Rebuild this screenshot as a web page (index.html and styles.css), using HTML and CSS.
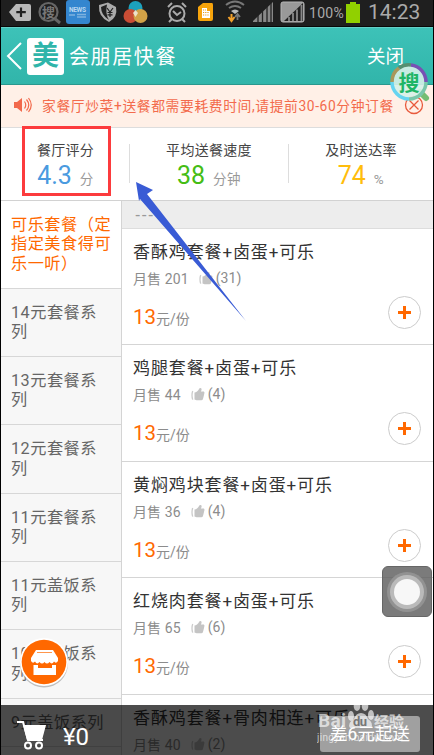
FILE: index.html
```
<!DOCTYPE html>
<html lang="zh-CN">
<head>
<meta charset="utf-8">
<title>会朋居快餐</title>
<link rel="stylesheet" href="styles.css">
</head>
<body>
<svg class="defs" width="0" height="0">
  <symbol id="thumb" viewBox="0 0 14 14"><path d="M1.700 4Q.3 8 1.700 12.600" fill="none" stroke="#ccc" stroke-width="1.300"/><path d="M3.500 5.500Q6 5.500 8.500 1.200Q10.900.3 10.600 3L9.800 4.500H12.800Q13.800 5 13.300 6.700L12 12Q11.600 13.300 10.300 13.300H5.500L3.500 12.500Z" fill="#c4c4c4"/></symbol>
</svg>
<div class="phone">
  <div class="status">
    <svg class="status-icons" viewBox="0 0 310 27" width="310" height="27">
      <path d="M9 12L16 4H29Q31 4 31 6V19Q31 21 29 21H16Z" fill="#b9b9b9"/><path d="M21 7.500V17M16.300 12.200H25.800" stroke="#222" stroke-width="2.200"/>
      <circle cx="48.500" cy="12" r="9" fill="none" stroke="#666" stroke-width="2.200"/><path d="M54 18L60 23" stroke="#666" stroke-width="3"/><text x="42" y="17" font-size="13" font-weight="700" fill="#777">搜</text>
      <rect x="66" y="0" width="24" height="24" rx="3" fill="#3486cf"/><text x="69" y="11.500" font-size="6.500" font-weight="700" fill="#b8d6ef" textLength="17">NEWS</text><path d="M69 15H75M77 14.500H86M77 17H86" stroke="#7db2df" stroke-width="1.500"/>
      <path d="M99 5L108 2.500L116 7Q118 17 109 22Q98 17 99 5Z" fill="#aaa"/><path d="M101 7L107 4.500Q105 14 109 20Q101 15 101 7Z" fill="#222"/><path d="M107 8L110 12L113 8M110 12V17M107.500 12.500H112.500M107.500 14.800H112.500" fill="none" stroke="#222" stroke-width="1.200"/>
      <circle cx="135.500" cy="8" r="7" fill="#1ca1bd"/><circle cx="130.500" cy="16" r="7" fill="#c94d35"/><circle cx="140.500" cy="16" r="7" fill="#d2a247"/><path d="M135.500 10L138 13L135.500 17L133 13Z" fill="#eee2c9"/>
      <g fill="none" stroke="#aaa" stroke-width="2"><circle cx="177" cy="13.500" r="7.500"/><path d="M173 11L177 15L181 12M168 7L172 3M182 3L186 7M172 19L169 22M182 19L185 22"/></g>
      <path d="M198 7L203 3H212Q213 3 213 5V19Q213 21 211 21H200Q198 21 198 19Z" fill="#f7a40c"/><path d="M202 8H207V11H210V18H202Z" fill="#fff"/><path d="M203 10H206M203 12.500H209M203 15H209" stroke="#e79a10" stroke-dasharray="1.200 1"/>
      <g fill="none" stroke="#777" stroke-width="2"><path d="M226 5Q235 -2 244 5"/><path d="M229 8Q235 4 241 8"/></g><path d="M231 11Q235 8 239 11L235 14Z" fill="#bbb"/><path d="M231.500 14V20M228.500 17L231.500 21L234.500 17" fill="none" stroke="#f2a12c" stroke-width="2"/><path d="M237.500 20V14M235 17L237.500 14L240 17" fill="none" stroke="#777" stroke-width="1.800"/>
      <path d="M253 22V21L273 2V22Z" fill="#888"/><path d="M258 15V22M262.500 11V22M267 7V22M271 3V22" stroke="#222" stroke-width="1.300"/>
      <rect x="281" y="2" width="23" height="20" rx="2" fill="#999" stroke="#b5b5b5"/><path d="M284 21L303 3V21Z" fill="#222"/><path d="M289 17V21M293 13V21M297 9.500V21M301.500 5V21" stroke="#888" stroke-width="1.800"/>
    </svg>
    <span class="percent">100%</span>
    <i class="battery"></i>
    <span class="clock">14:23</span>
  </div>
  <header class="header">
    <svg class="back" width="16" height="28" viewBox="0 0 16 28"><path d="M15 1L2 14L15 27" fill="none" stroke="#fff" stroke-width="2"/></svg>
    <div class="logo">美</div>
    <h1>会朋居快餐</h1>
    <span class="close">关闭</span>
  </header>
  <div class="notice">
    <svg width="20" height="18" viewBox="0 0 20 18"><path d="M1 6H4L9 2V16L4 12H1Z" fill="#f2694b"/><path d="M11.500 5.500Q14 9 11.500 12.500M13.500 3.500Q18 9 13.500 14.500M15.500 2Q21 9 15.500 16" fill="none" stroke="#f2694b" stroke-width="1.200"/></svg>
    <span class="notice-text">家餐厅炒菜+送餐都需要耗费时间,请提前30-60分钟订餐</span>
    <svg class="dismiss" width="20" height="20" viewBox="0 0 20 20"><g fill="none" stroke="#e85a3c" stroke-width="1.300"><circle cx="10" cy="10" r="8.500"/><path d="M5.500 5.500L14.500 14.500M14.500 5.500L5.500 14.500"/></g></svg>
  </div>
  <div class="stats">
    <div class="stat blue"><p>餐厅评分</p><div><b>4.3</b><span>分</span></div></div>
    <div class="stat green"><p>平均送餐速度</p><div><b>38</b><span>分钟</span></div></div>
    <div class="stat yellow"><p>及时送达率</p><div><b>74</b><span>%</span></div></div>
  </div>
  <div class="content">
    <nav class="menu">
      <div class="active">可乐套餐<span class="paren" lang="zh-TW">（</span>定<br>指定美食得可<br>乐一听<span class="paren" lang="zh-TW">）</span></div>
      <div>14元套餐系<br>列</div>
      <div>13元套餐系<br>列</div>
      <div>12元套餐系<br>列</div>
      <div>11元套餐系<br>列</div>
      <div>11元盖饭系<br>列</div>
      <div>10元盖饭系<br>列</div>
      <div class="short">9元盖饭系列</div>
      <div></div>
    </nav>
    <main class="list">
      <div class="group">---</div>
      <article><h2>香酥鸡套餐+卤蛋+可乐</h2><div class="meta"><span>月售 201</span><svg><use href="#thumb"/></svg><span>(31)</span></div><div class="price"><b>13</b>元/份</div><i class="add"></i></article>
      <article><h2>鸡腿套餐+卤蛋+可乐</h2><div class="meta"><span>月售 44</span><svg><use href="#thumb"/></svg><span>(4)</span></div><div class="price"><b>13</b>元/份</div><i class="add"></i></article>
      <article><h2>黄焖鸡块套餐+卤蛋+可乐</h2><div class="meta"><span>月售 36</span><svg><use href="#thumb"/></svg><span>(4)</span></div><div class="price"><b>13</b>元/份</div><i class="add"></i></article>
      <article><h2>红烧肉套餐+卤蛋+可乐</h2><div class="meta"><span>月售 65</span><svg><use href="#thumb"/></svg><span>(6)</span></div><div class="price"><b>13</b>元/份</div><i class="add"></i></article>
      <article><h2>香酥鸡套餐+骨肉相连+可乐</h2><div class="meta"><span>月售 40</span><svg><use href="#thumb"/></svg><span>(2)</span></div></article>
    </main>
  </div>
  <div class="cart">
    <svg width="32" height="30" viewBox="0 0 32 30"><path d="M1 2H7L12 20H27" fill="none" stroke="#fff" stroke-width="2"/><path d="M7 5H30L26 20H11Z" fill="#fff"/><g fill="none" stroke="#fff" stroke-width="2"><circle cx="12" cy="25.500" r="3"/><circle cx="23" cy="25.500" r="3"/></g></svg>
    <span class="total">¥0</span>
    <span class="minimum">差6元起送</span>
  </div>
  <svg class="shop" width="50" height="52" viewBox="0 0 50 52"><circle cx="25" cy="26.500" r="24" fill="#999" opacity=".6"/><circle cx="25" cy="25" r="24" fill="#fff"/><circle cx="25" cy="25" r="22.300" fill="#ff6800"/><path d="M17 13H34L39 21V24Q37 27 35 24.500Q33 28 30.500 25Q28 28 25.500 25Q23 28 20.500 25Q18 28 16 24.500Q14 27 12 24V21Z M14.500 28H19V31H33V28H37V38H14.500Z" fill="#fff"/><path d="M18 15.500H33" stroke="#ff6800" stroke-width=".7"/></svg>
  <div class="assist"><i></i></div>
  <svg class="search-float" width="42" height="43" viewBox="0 0 42 43">
    <path d="M30 30L36 36" stroke="#75bd72" stroke-width="6" stroke-linecap="round"/><circle cx="19" cy="20" r="17" fill="#d7f1e8" fill-opacity=".9"/>
    <g fill="none" stroke-width="3.500"><path d="M2 20A17 17 0 0 1 9 6" stroke="#a9965b"/><path d="M9 6A17 17 0 0 1 21 3" stroke="#568f70"/><path d="M21 3A17 17 0 0 1 36 20" stroke="#7851b4"/><path d="M36 20A17 17 0 0 1 19 37" stroke="#79c7aa"/><path d="M19 37A17 17 0 0 1 2 20" stroke="#66d4f0"/></g>
    <text x="8.500" y="27.500" font-size="21" font-weight="700" fill="#20b565">搜</text>
  </svg>
  <svg class="watermark" width="92" height="44" viewBox="0 0 92 44"><g fill="#fff" fill-opacity=".65"><text x="1" y="27" font-size="19" font-weight="700" textLength="28">Bai</text><ellipse cx="34" cy="16" rx="3" ry="5"/><ellipse cx="40" cy="6" rx="3.300" ry="5"/><ellipse cx="48" cy="6" rx="3.300" ry="5"/><ellipse cx="54" cy="15" rx="3" ry="5"/><path d="M44 13Q49 13 51 19Q57 23 54 28H33Q30 23 37 19Q39 13 44 13Z"/><text x="57" y="27" font-size="15" font-weight="700" textLength="30">经验</text><text x="0" y="41" font-size="10" textLength="86">jingyan.baidu.com</text></g><text x="36" y="26" font-size="13" font-weight="700" fill="#777" textLength="14">du</text></svg>
  <svg class="annotation" width="232" height="204" viewBox="0 0 232 204"><rect x="3.500" y="6.500" width="86" height="67" fill="none" stroke="#fc3b3d" stroke-width="3"/><path d="M116 61L133 69L127 73L226 200L120 78L119 80Z" fill="#395bd5"/></svg>
</div>
</body>
</html>
```
FILE: styles.css
```
* { box-sizing: border-box; }
body { margin: 0; font-family: Roboto, "Noto Sans CJK SC", sans-serif; background: #fff; overflow: hidden; }
p, h1, h2 { margin: 0; font-weight: 400; }
.defs { position: absolute; }
.phone { position: relative; width: 434px; height: 755px; display: flex; flex-direction: column; border: solid #000; border-width: 0 1px; overflow: hidden; }
.status { height: 27px; flex: none; display: flex; align-items: center; background: #1f1f1f; border-bottom: 1px solid #080808; color: #aaa; }
.status-icons { flex: none; margin-left: -1px; }
.percent { font-size: 14px; width: 36px; margin-left: -1px; letter-spacing: .3px; line-height: 25px; }
.battery { width: 14px; height: 19px; background: #91d000; margin-left: 1px; position: relative; flex: none; }
.battery::before { content: ""; position: absolute; left: 4px; top: -2px; width: 6px; height: 2px; background: #91d000; }
.clock { font-size: 21px; margin-left: 8px; line-height: 22px; padding-bottom: 3px; }
.header { height: 58px; flex: none; display: flex; align-items: center; padding: 0 29px 0 5px; background: linear-gradient(#3dc2b8, #31b5aa); border-top: 1px solid #64d0c7; border-bottom: 1px solid #29988e; color: #fff; }
.back { flex: none; }
.logo { width: 37px; height: 37px; margin-left: 5px; border-radius: 3px; background: #fff; color: #2fb5aa; font-size: 27px; font-weight: 700; line-height: 36px; text-align: center; }
h1 { font-size: 20px; letter-spacing: 1.600px; margin-left: 5px; line-height: 40px; padding-top: 1px; }
.close { font-size: 18.500px; margin-left: auto; line-height: 40px; padding-top: 1px; }
.notice { height: 43px; flex: none; display: flex; align-items: center; padding: 0 9px 2px 12px; background: #fff0e7; border-bottom: 1px solid #ddd; color: #f36b4c; }
.notice-text { font-size: 13.800px; letter-spacing: .6px; margin-left: 9px; white-space: nowrap; }
.dismiss { margin-left: auto; flex: none; }
.stats { height: 73px; flex: none; display: grid; grid-template-columns: 128px 159px 1fr; border-bottom: 1px solid #d2d2d2; background: #fff; }
.stat { position: relative; text-align: center; padding-top: 12px; }
.stat + .stat::before { content: ""; position: absolute; left: 0; top: 16px; width: 1px; height: 39px; background: #ddd; }
.stat p { font-size: 14px; line-height: 20px; letter-spacing: .3px; color: #444; padding-left: 1px; }
.stat div { display: flex; align-items: baseline; justify-content: center; gap: 8px; height: 30px; line-height: 32px; padding-left: 1px; }
.stat b { font-size: 25px; font-weight: 400; }
.stat span { font-size: 13.500px; color: #999; letter-spacing: .5px; }
.blue b { color: #4a9adf; }
.green b { color: #45bd14; }
.yellow b { color: #ffbd0c; }
.content { flex: 1; min-height: 0; display: flex; overflow: hidden; }
.menu { width: 121px; flex: none; border-right: 1px solid #d4d4d4; }
.menu div { height: 68.400px; padding: 14px 0 0 10px; background: #f7f7f7; border-bottom: 1px solid #d7d7d7; color: #666; font-size: 16.200px; line-height: 19.300px; letter-spacing: .5px; white-space: nowrap; }
.menu .active { height: 87.500px; background: #fff; color: #ff6800; }
.menu .short { height: 48.500px; }
.paren { font-family: "Noto Sans CJK TC", sans-serif; line-height: 1; }
.list { flex: 1; background: #fff; }
.group { height: 28px; padding-left: 13px; line-height: 28px; background: #ededed; border-bottom: 1px solid #ddd; color: #999; font-size: 16px; letter-spacing: 1.200px; font-family: "Liberation Sans", sans-serif; }
article { height: 116.400px; padding: 11px 0 0 11px; position: relative; border-bottom: 1px solid #d5d5d5; }
h2 { font-size: 17px; letter-spacing: .88px; line-height: 25px; color: #333; white-space: nowrap; }
.meta { display: flex; align-items: center; height: 20px; margin-top: 3px; color: #8c8c8c; font-size: 14px; letter-spacing: .1px; white-space: pre; }
.meta svg { width: 14px; height: 14px; margin: 0 3px 0 10px; }
.price { color: #8c8c8c; font-size: 14px; line-height: 28px; margin-top: 15px; }
.price b { color: #ff6800; font-size: 20.500px; font-weight: 400; }
.add { position: absolute; right: 12px; top: 67px; width: 33px; height: 33px; border: 1px solid #ccc; border-radius: 50%; background: linear-gradient(#ff6800, #ff6800) center / 13px 3px no-repeat, linear-gradient(#ff6800, #ff6800) center / 3px 13px no-repeat; }
.cart { position: absolute; inset: auto 0 0; height: 50px; display: flex; align-items: center; padding: 0 13px 0 15px; background: rgba(0, 0, 0, .7); color: #fff; }
.total { font-size: 24px; margin-left: 15px; line-height: 50px; padding-top: 13px; }
.cart svg { margin-top: 10px; }
.minimum { width: 100px; height: 36px; margin: 8px 0 0 auto; border-radius: 3px; background: #a0a0a0; font-size: 17.500px; line-height: 36px; text-align: center; }
.shop { position: absolute; left: 18px; top: 637px; }
.assist { position: absolute; left: 381px; top: 566px; width: 50px; height: 51px; border-radius: 6px; background: rgba(90, 90, 90, .8); border: 1px solid #666; }
.assist i { position: absolute; left: 11px; top: 12px; width: 26px; height: 26px; border-radius: 50%; background: #f7f7f7; box-shadow: 0 0 0 4px #bababa, 0 0 0 7px #929292; }
.search-float { position: absolute; left: 389px; top: 62px; }
.watermark { position: absolute; left: 316px; top: 700px; }
.annotation { position: absolute; left: 19px; top: 121px; }
```
